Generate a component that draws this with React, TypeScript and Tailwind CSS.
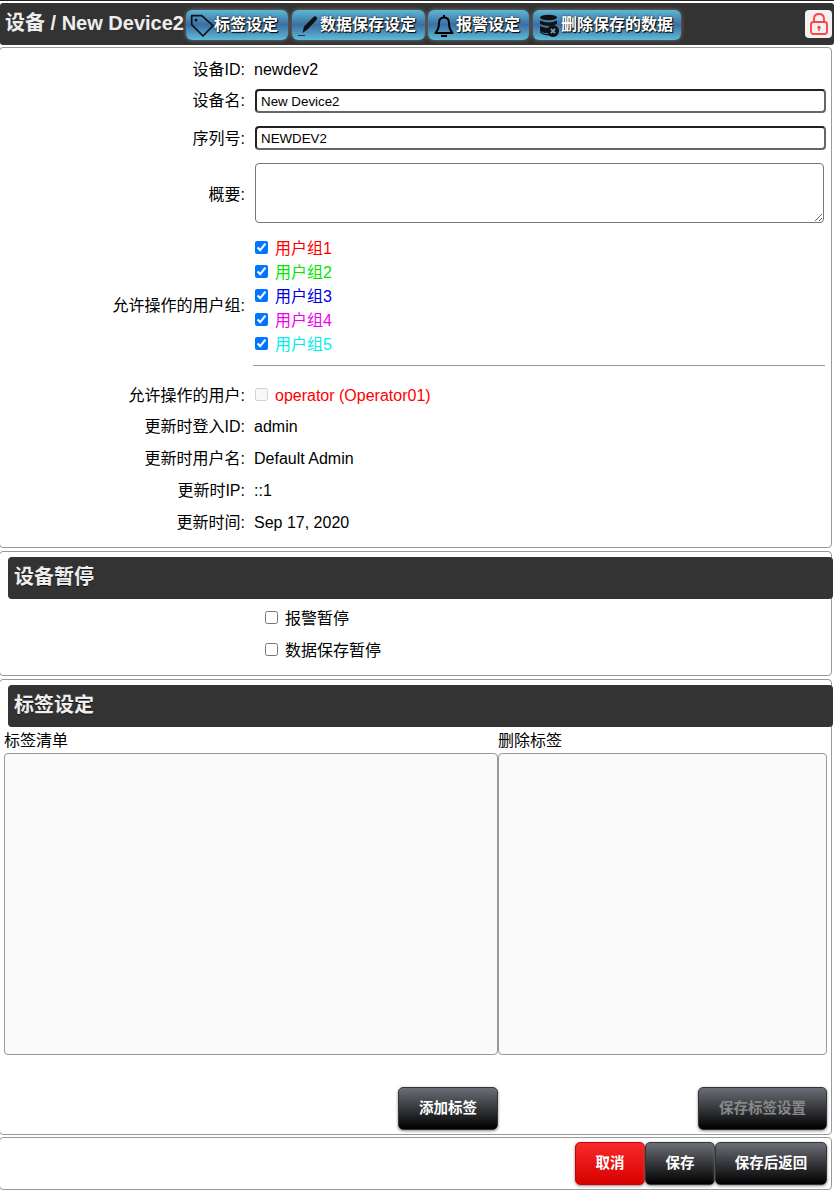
const FONT = "[font-family:'Liberation_Sans','Noto_Sans_CJK_SC',sans-serif]";

function Panel({ className, children }: { className: string; children?: React.ReactNode }) {
  return <div className={"mr-[2px] -ml-px rounded-[4px] border border-[#999] bg-white " + className}>{children}</div>;
}

function Row({ label, children, className, labelClass = "" }: { label: string; children: React.ReactNode; className: string; labelClass?: string }) {
  return (
    <div className={"flex items-center text-[16px] text-black " + className}>
      <div className={"w-[245px] shrink-0 text-right " + labelClass}>{label}:</div>
      <div className="ml-[9px] min-w-0 flex-1">{children}</div>
    </div>
  );
}

function TagIcon() {
  return (
    <svg width="24" height="24" viewBox="0 0 24 24" fill="none" stroke="#111" strokeWidth="1.7" strokeLinejoin="round" className="shrink-0">
      <path d="M1.7 2.7 L11.7 2.7 L23 12.7 L13 23 L1.7 11.7 Z" />
      <circle cx="6" cy="7" r="1.5" fill="#111" stroke="none" />
    </svg>
  );
}
function PenIcon() {
  return (
    <svg width="24" height="24" viewBox="0 0 24 24" className="shrink-0">
      <path d="M6.5 20 L8 13.5 L17 4.5 Q19 2.5 20.5 4 Q22 5.5 20 7.5 L11.5 16.5 Z" fill="#111" />
      <path d="M2 22.5 L9 22.5" stroke="#333" strokeWidth="1" />
    </svg>
  );
}
function BellIcon() {
  return (
    <svg width="24" height="24" viewBox="0 0 24 24" fill="none" stroke="#000" strokeWidth="2" className="shrink-0">
      <path d="M3.5 20 Q7 16 7 10 Q7 4.5 12 4.5 Q17 4.5 17 10 Q17 16 20.5 20 Z" strokeLinejoin="round" />
      <path d="M12 2 V4.5" />
      <path d="M9 23 H15" strokeWidth="2.2" />
    </svg>
  );
}
function DbIcon() {
  return (
    <svg width="24" height="24" viewBox="0 0 24 24" className="shrink-0">
      <ellipse cx="11.5" cy="4.5" rx="8.5" ry="2.8" fill="#111" />
      <path d="M3 7.5 Q11.5 11.5 20 7.5 V11 Q11.5 15 3 11 Z" fill="#111" />
      <path d="M3 13 Q8 15.5 13 15 L10 20 Q5 20 3 18 Z" fill="#111" />
      <path d="M3 19.5 Q6 22.5 12 22.5 L11 21 Q6 21 3 18.5 Z" fill="#111" />
      <circle cx="16" cy="18" r="6" fill="#111" />
      <path d="M13.9 15.9 L18.1 20.1 M18.1 15.9 L13.9 20.1" stroke="#5aa6c4" strokeWidth="1.8" />
    </svg>
  );
}

function HeadBtn({ w, icon, label }: { w: string; icon: React.ReactNode; label: string }) {
  return (
    <div className={"flex h-[30px] items-center rounded-[6px] bg-[linear-gradient(#5db8d3,#3c6fa3_48%,#3f78a9_55%,#5dbbd8)] pl-[4px] text-[16px] font-bold whitespace-nowrap text-white shadow-[0_0_4px_#777] [text-shadow:1px_1px_1px_#000,0_0_2px_#222] " + w}>
      {icon}
      <span>{label}</span>
    </div>
  );
}

function SectionBar({ label }: { label: string }) {
  return (
    <div className="-mr-[2px] ml-[8px] flex h-[42px] items-center rounded-[4px] bg-[#333] pb-[3px] pl-[6px] text-[20px] font-bold text-[#eee] [text-shadow:0_1px_0_#111]">
      {label}
    </div>
  );
}

function DarkBtn({ w, label, variant = "dark" }: { w: string; label: string; variant?: "dark" | "red" | "dim" }) {
  const color =
    variant === "red"
      ? "bg-[linear-gradient(#f92a2a,#d60000)] border-[#c00] text-white"
      : "bg-[linear-gradient(#6b6e76,#000)] border-[#333] " + (variant === "dim" ? "text-[#888]" : "text-white");
  return (
    <div className={"flex h-[43px] items-center justify-center rounded-[5px] border text-[14.5px] font-bold shadow-[0_1px_3px_#888] " + color + " " + w}>
      {label}
    </div>
  );
}

const GROUPS: [string, string][] = [
  ["用户组1", "text-[#f00]"],
  ["用户组2", "text-[#00e600]"],
  ["用户组3", "text-[#00d]"],
  ["用户组4", "text-[#e0e]"],
  ["用户组5", "text-[#0ee]"],
];

const INPUT = "block h-[24px] w-[571px] rounded-[4px] border-2 border-t-[#222] border-l-[#222] border-r-[#666] border-b-[#666] bg-white px-[4px] text-[13.33px] text-black outline-none";
const VAL = "block pt-[2px]";

export default function App() {
  return (
    <div className={"min-h-[1191px] overflow-hidden bg-white " + FONT}>
      <div className="h-[3px] border-t border-[#222]" />
      <div className="flex h-[42px] items-center rounded-[3px] bg-[#333]">
        <div className="ml-[5px] w-[181px] shrink-0 pb-[2px] text-[20px] leading-[24px] font-bold whitespace-nowrap text-[#eee]">设备 / New Device2</div>
        <div className="flex pt-[1px]">
          <HeadBtn w="w-[102px]" icon={<TagIcon />} label="标签设定" />
          <HeadBtn w="ml-[4px] w-[133px]" icon={<PenIcon />} label="数据保存设定" />
          <HeadBtn w="ml-[3px] w-[101px]" icon={<BellIcon />} label="报警设定" />
          <HeadBtn w="ml-[4px] w-[148px]" icon={<DbIcon />} label="删除保存的数据" />
        </div>
        <div className="mr-[2px] ml-auto flex h-[28px] w-[27px] items-center justify-center rounded-[4px] bg-[#f2f2f2]">
          <svg width="18" height="22" viewBox="0 0 18 22" fill="none" stroke="#f44" strokeWidth="1.9">
            <path d="M4 9 V6 Q4 1 9 1 Q14 1 14 6 V9" />
            <rect x="1" y="9" width="16" height="12" rx="2.5" />
            <circle cx="9" cy="14.5" r="1.7" fill="#f44" stroke="none" />
            <path d="M9 15 V18" strokeWidth="1.5" />
          </svg>
        </div>
      </div>

      <Panel className="mt-[2px] h-[501px]">
        <Row label="设备ID" className="h-[41px]" labelClass="pt-[3px]"><span className="block pt-[3px]">newdev2</span></Row>
        <Row label="设备名" className="h-[24px]"><input readOnly value="New Device2" className={INPUT + " ml-[1px]"} /></Row>
        <Row label="序列号" className="mt-[13px] h-[24px]" labelClass="pt-[2px]"><input readOnly value="NEWDEV2" className={INPUT + " ml-[1px]"} /></Row>
        <Row label="概要" className="mt-[13px] h-[60px]" labelClass="pt-[4px]"><textarea readOnly className="ml-[1px] block h-[60px] w-[569px] rounded-[4px] border border-[#767676] bg-white" /></Row>
        <Row label="允许操作的用户组" className="mt-[12px] h-[120px]" labelClass="pt-[22px]">
          <div>
            {GROUPS.map(([t, c]) => (
              <label key={t} className="flex h-[24px] items-center">
                <input type="checkbox" readOnly checked className="ml-[1px] h-[13px] w-[13px] accent-[#0075ff]" />
                <span className={"ml-[7px] pt-[4px] " + c}>{t}</span>
              </label>
            ))}
          </div>
        </Row>
        <div className="mt-[10px] mr-[6px] ml-[253px] h-px bg-[#999]" />
        <Row label="允许操作的用户" className="mt-[13px] h-[31px]" labelClass="pt-[2px]">
          <label className="flex items-center">
            <input type="checkbox" disabled className="ml-[1px] h-[13px] w-[13px]" />
            <span className="ml-[7px] pt-[2px] text-[#f00]">operator (Operator01)</span>
          </label>
        </Row>
        <Row label="更新时登入ID" className="h-[32px]" labelClass="pt-[2px]"><span className={VAL}>admin</span></Row>
        <Row label="更新时用户名" className="h-[32px]" labelClass="pt-[2px]"><span className={VAL}>Default Admin</span></Row>
        <Row label="更新时IP" className="h-[32px]" labelClass="pt-[2px]"><span className={VAL}>::1</span></Row>
        <Row label="更新时间" className="h-[32px]" labelClass="pt-[2px]"><span className={VAL}>Sep 17, 2020</span></Row>
      </Panel>

      <Panel className="mt-[3px] h-[125px] pt-[5px]">
        <SectionBar label="设备暂停" />
        <div className="mt-[2px] pl-[265px] text-[16px] text-black">
          <label className="flex h-[32px] items-center"><input type="checkbox" className="h-[13px] w-[13px]" /><span className="ml-[7px] pt-[4px]">报警暂停</span></label>
          <label className="flex h-[32px] items-center"><input type="checkbox" className="h-[13px] w-[13px]" /><span className="ml-[7px] pt-[4px]">数据保存暂停</span></label>
        </div>
      </Panel>

      <Panel className="mt-[3px] h-[456px] pt-[5px]">
        <SectionBar label="标签设定" />
        <div className="ml-[4px] flex text-[16px] text-black">
          <div className="w-[494px]">
            <div className="h-[26px] leading-[28px]">标签清单</div>
            <div className="h-[302px] rounded-[4px] border border-[#999] bg-[#fafafa]" />
          </div>
          <div className="w-[329px]">
            <div className="h-[26px] leading-[28px]">删除标签</div>
            <div className="h-[302px] rounded-[4px] border border-[#999] bg-[#fafafa]" />
          </div>
        </div>
        <div className="mt-[32px] flex">
          <DarkBtn w="ml-[398px] w-[100px]" label="添加标签" />
          <DarkBtn w="ml-[200px] w-[129px]" label="保存标签设置" variant="dim" />
        </div>
      </Panel>

      <Panel className="mt-[2px] flex h-[53px] justify-end pt-[4px] pr-[4px]">
        <DarkBtn w="w-[70px]" label="取消" variant="red" />
        <DarkBtn w="w-[70px]" label="保存" />
        <DarkBtn w="w-[112px]" label="保存后返回" />
      </Panel>
    </div>
  );
}
